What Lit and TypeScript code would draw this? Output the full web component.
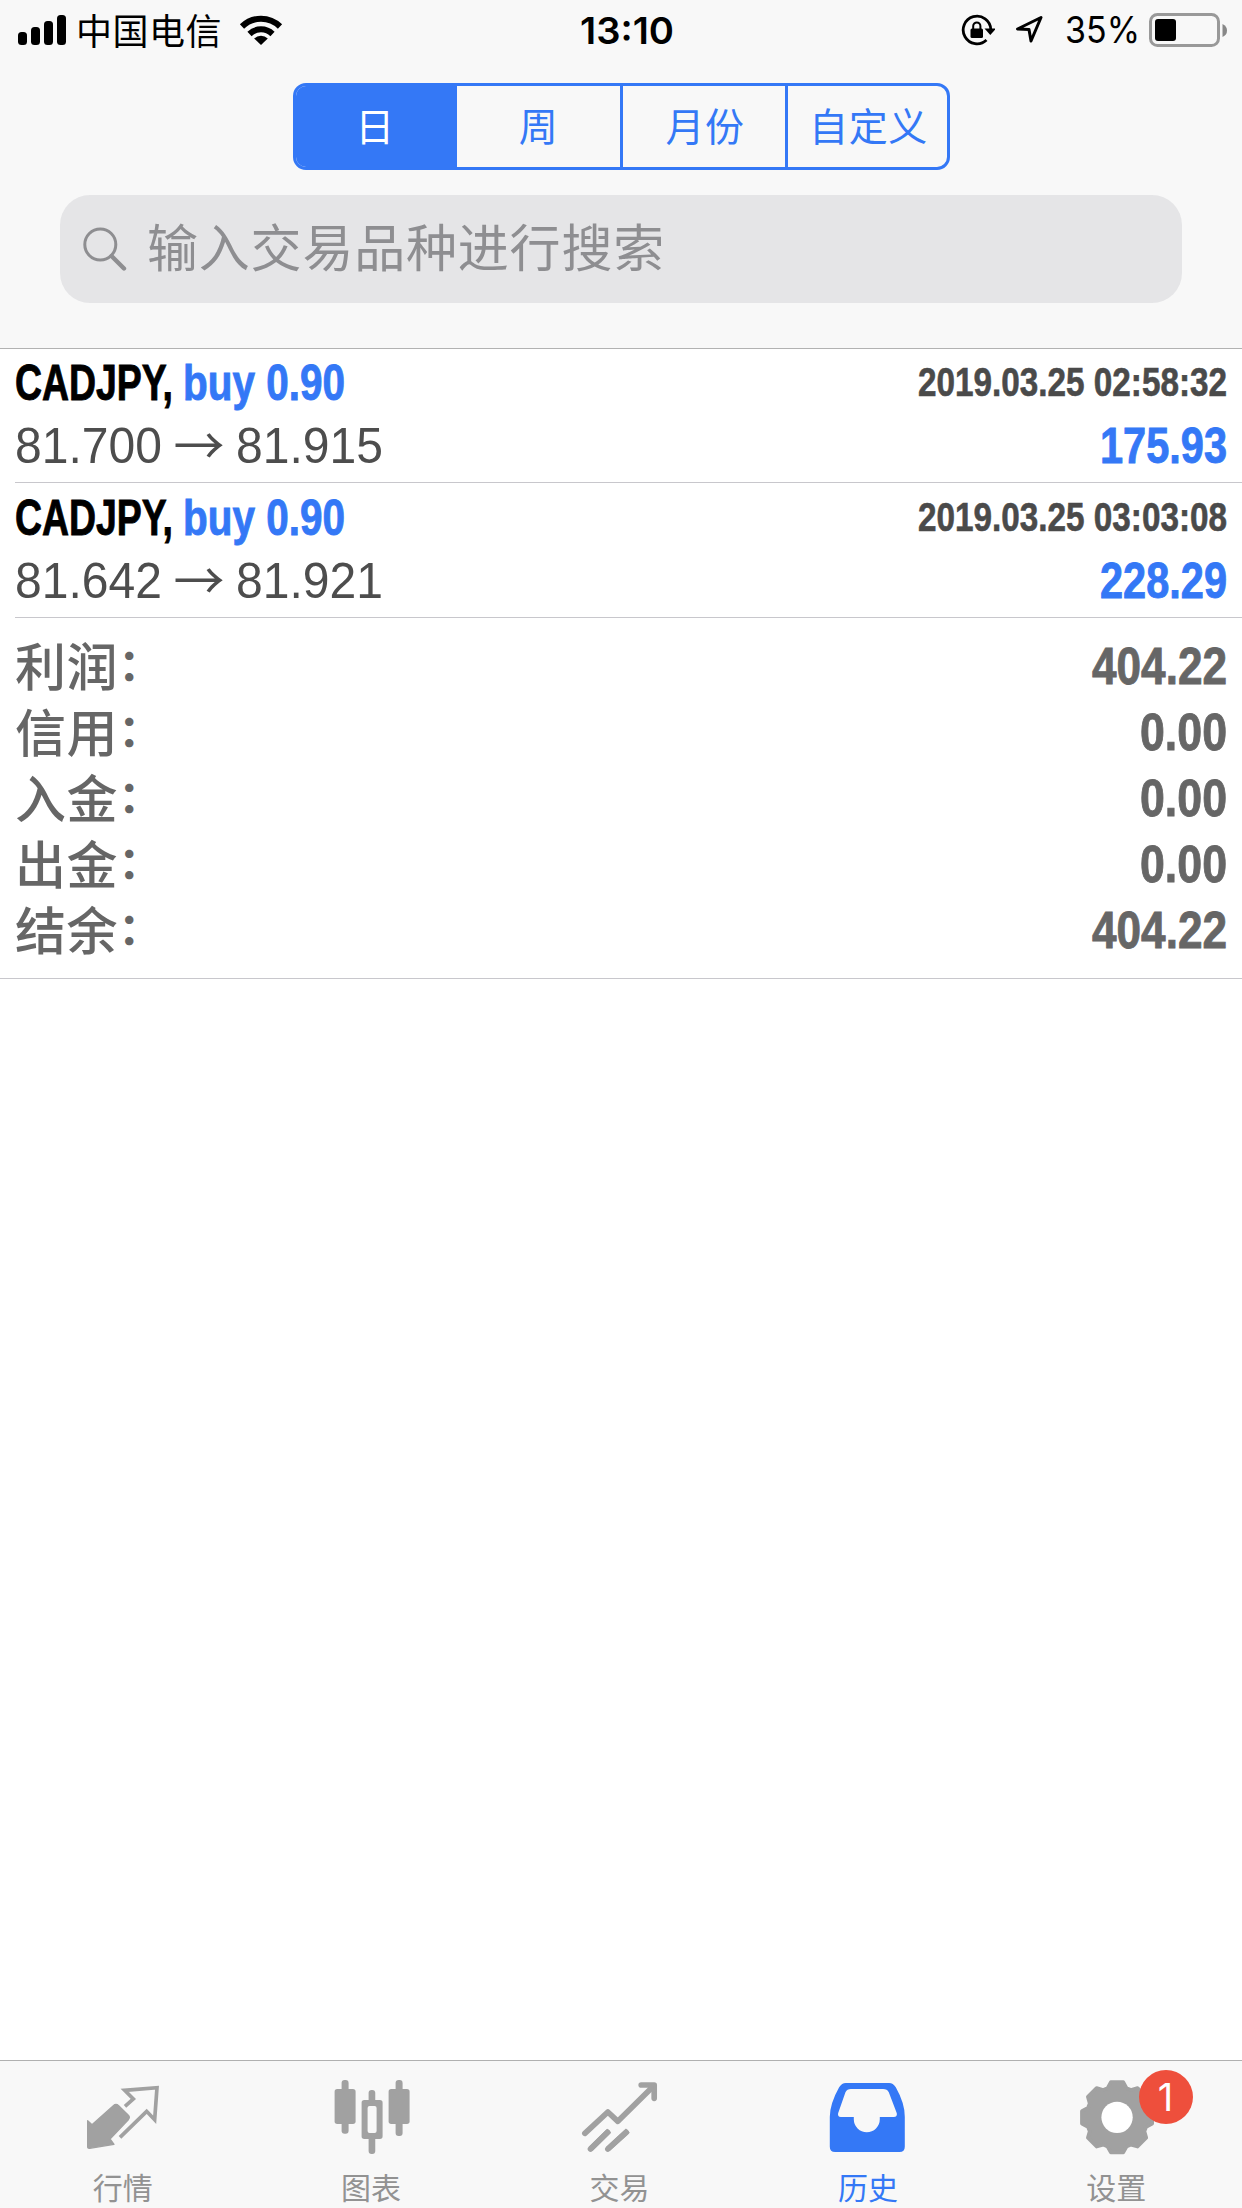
import { LitElement, html, svg, css } from "lit";
import { customElement, property } from "lit/decorators.js";
import { classMap } from "lit/directives/class-map.js";

/** Text condensed or stretched horizontally to an exact width. */
@customElement("fit-text")
class FitText extends LitElement {
  @property() text = "";
  @property({ type: Number }) width = 0;

  static styles = css`
    :host { display: inline-block; white-space: pre; text-align: left; }
    .inner { display: inline-block; transform-origin: 0 50%; }
  `;

  render() {
    return html`<span class="inner">${this.text}</span>`;
  }

  updated() {
    const inner = this.renderRoot.querySelector(".inner") as HTMLElement;
    const natural = inner.getBoundingClientRect().width;
    if (!natural || inner.style.transform) return;
    inner.style.transform = `scaleX(${this.width / natural})`;
    this.style.width = `${this.width}px`;
    inner.style.marginRight = `${this.width - natural}px`;
  }
}

interface Deal {
  symbol: string;
  side: string;
  time: string;
  open: string;
  close: string;
  profit: string;
}

const deals: Deal[] = [
  { symbol: "CADJPY,", side: "buy 0.90", time: "2019.03.25 02:58:32", open: "81.700", close: "81.915", profit: "175.93" },
  { symbol: "CADJPY,", side: "buy 0.90", time: "2019.03.25 03:03:08", open: "81.642", close: "81.921", profit: "228.29" },
];

const totals = [
  { label: "利润", value: "404.22", width: 135 },
  { label: "信用", value: "0.00", width: 87 },
  { label: "入金", value: "0.00", width: 87 },
  { label: "出金", value: "0.00", width: 87 },
  { label: "结余", value: "404.22", width: 135 },
];

const gearOutline = () => {
  const pts: string[] = [];
  const at = (deg: number, r: number) => {
    const a = (deg * Math.PI) / 180;
    return `${(230 + r * Math.sin(a)).toFixed(1)},${(202 + r * Math.cos(a)).toFixed(1)}`;
  };
  for (let k = 0; k < 8; k++) {
    const c = k * 45;
    pts.push(at(c - 18, 92), at(c - 10, 107), at(c + 10, 107), at(c + 18, 92));
  }
  return `M${pts.join("L")}Z`;
};

const tabs = [
  {
    label: "行情",
    box: "-150 33 745.2 312",
    icon: svg`
      <path d="M113,212L126,224L190,167Q198,160 206,167L235,196Q241,202 235,209L180,267L192,283L119,295Q113,296 113,290Z"
        fill="currentColor" stroke="currentColor" stroke-width="4" stroke-linejoin="round"/>
      <path d="M225,169L250,147L224,121L321,113L314,209L290,184L210,262" fill="none" stroke="currentColor" stroke-width="11"/>`,
  },
  {
    label: "图表",
    box: "595.2 33 745.2 312",
    icon: svg`
      <g fill="currentColor">
        <rect x="855" y="117" width="63" height="105" rx="8"/><rect x="876" y="90" width="21" height="161" rx="9"/>
        <rect x="1017" y="117" width="63" height="105" rx="8"/><rect x="1038" y="90" width="21" height="168" rx="9"/>
        <path fill-rule="evenodd" d="M944,150h47q8,0 8,8v101q0,8 -8,8h-47q-8,0 -8,-8v-101q0,-8 8,-8zM960,168q-6,0 -6,6v69q0,6 6,6h15q6,0 6,-6v-69q0,-6 -6,-6z"/>
        <rect x="957" y="120" width="20" height="40" rx="9"/><rect x="957" y="258" width="20" height="54" rx="9"/>
      </g>`,
  },
  {
    label: "交易",
    box: "-159.6 33 745.2 312",
    icon: svg`
      <g fill="none" stroke="currentColor" stroke-width="17" stroke-linecap="round" stroke-linejoin="round">
        <path d="M104,250L173,186L203,214L304,114"/>
        <path d="M273,105H312V145"/>
        <path d="M290,105L312,127V105Z" stroke-width="5" fill="currentColor"/>
        <path d="M121,297L172,247M173,297L228,247"/>
        <path d="M121,297L177,242M173,297L233,242" stroke-linecap="butt"/>
      </g>`,
  },
  {
    label: "历史",
    box: "585.6 33 745.2 312",
    active: true,
    icon: svg`
      <path fill="currentColor" fill-rule="evenodd" d="M888,99H1018Q1030,99 1038,112Q1065,160 1065,200V290Q1065,306 1049,306H856Q840,306 840,290V200Q841,160 868,112Q876,99 888,99Z
        M903,117Q892,117 887,127L865,190Q863,201 873,201H912V208A39,39 0 0 0 990,208V201H1032Q1043,201 1041,190L1017,127Q1012,117 1000,117Z"/>`,
  },
  {
    label: "设置",
    box: "-139.2 33 745.2 312",
    badge: "1",
    icon: svg`
      <path fill="currentColor" stroke="currentColor" stroke-width="11" stroke-linejoin="round" d="${gearOutline()}"/>
      <circle cx="230" cy="202" r="47" fill="#fff"/>`,
  },
] as { label: string; box: string; active?: boolean; badge?: string; icon: unknown }[];

@customElement("app-root")
class AppRoot extends LitElement {
  static styles = css`
    :host {
      display: flex; flex-direction: column; box-sizing: border-box;
      width: 1242px; height: 2208px; overflow: hidden; background: #fff;
      font-family: "Liberation Sans", "Noto Sans CJK SC", sans-serif; color: #000;
    }
    svg { display: block; flex: none; }
    .cjk { font-family: "Noto Sans CJK SC", sans-serif; }

    .top { height: 349px; box-sizing: border-box; background: #f8f8f8; border-bottom: 1px solid #b2b2b2; flex: none;
      display: flex; flex-direction: column; }
    .status { height: 62px; display: grid; grid-template-columns: 1fr auto 1fr; align-items: center; }
    .status-left { display: flex; align-items: center; padding-left: 18px; height: 60px; padding-bottom: 2px; }
    .status-right { display: flex; align-items: center; justify-content: flex-end; padding-right: 15px; height: 60px; padding-bottom: 2px; }
    .carrier { font-size: 36px; line-height: 52px; letter-spacing: 0.5px; margin: 0 17px 2px 10px; }
    .clock { font: 600 37px/62px Inter, sans-serif; padding: 0 0 0 11px; }
    .battery-text { font: 400 36.5px/62px Inter, sans-serif; margin: 0 9px 0 21px; }
    .loc { margin-left: 20px; }

    .segments { margin: 21px 0 0 293px; width: 657px; height: 87px; box-sizing: border-box;
      border: 3px solid #3478f6; border-radius: 13px; overflow: hidden; display: grid;
      grid-template-columns: 161px 163px 165px 1fr; }
    .segment { display: flex; align-items: center; justify-content: center; color: #3478f6;
      font-size: 39px; letter-spacing: 0.6px; line-height: 75px; padding-bottom: 4px; }
    .segment:nth-child(n + 3) { border-left: 3px solid #3478f6; padding-left: 2px; }
    .segment:nth-child(1) { padding-right: 3px; }
    .segment.on { background: #3478f6; color: #fff; }

    .search { margin: 25px 60px 0; height: 108px; border-radius: 30px; background: #e5e5e7; color: #8e8e91;
      display: flex; align-items: center; padding-left: 22px; gap: 19px; }
    .placeholder { font-size: 51px; line-height: 80px; letter-spacing: 0.8px; padding-bottom: 9px; }

    .deal { margin-left: 15px; height: 135px; box-sizing: border-box; border-bottom: 1px solid #c8c7cc;
      padding: 4px 15px 0 0; }
    .deal:first-child { height: 134px; padding-top: 3px; }
    .line { display: flex; justify-content: space-between; align-items: center; height: 62px; line-height: 62px; }
    .line + .line { padding-top: 1px; }
    .left { display: flex; align-items: center; }
    .bold { font-weight: 700; font-size: 50px; -webkit-text-stroke: 0.9px currentColor; }
    .blue { color: #3478f6; }
    .side { margin-left: 10px; }
    .time { font-weight: 700; font-size: 40px; color: #4a4a4a; -webkit-text-stroke: 0.6px currentColor; padding-bottom: 2px; }
    .price { font-size: 49.5px; color: #4d4d4d; }
    .arrow { font: 400 51px/56px "Noto Sans CJK SC", sans-serif; color: #4d4d4d; width: 74px; text-align: center; padding-bottom: 6px; }

    .totals { height: 361px; box-sizing: border-box; padding: 15px 15px 0; border-bottom: 1px solid #c8c7cc; }
    .total { height: 66px; display: flex; justify-content: space-between; color: #666; }
    .label { font-weight: 500; font-size: 51px; line-height: 72px; letter-spacing: 0.6px; }
    .label-colon { font-size: 44px; font-weight: 700; position: relative; top: -5px; }
    .total-value { font-weight: 700; font-size: 52px; line-height: 66px; -webkit-text-stroke: 0.9px currentColor; }

    .body { flex: 1; }
    .tabs { flex: none; height: 148px; box-sizing: border-box; border-top: 1px solid #b0b0b0; background: #f8f8f8;
      display: grid; grid-template-columns: repeat(5, 1fr); }
    .tab { position: relative; display: flex; flex-direction: column; align-items: center; color: #929292; }
    .tab .icon { color: #a1a1a1; }
    .tab.on, .tab.on .icon { color: #3478f6; }
    .tab-label { font-size: 30px; line-height: 42px; padding-right: 3px; }
    .badge { position: absolute; left: 145px; top: 9px; width: 54px; height: 54px; border-radius: 50%;
      background: #ee4f3c; color: #fff; font: 400 38px/54px Inter, sans-serif; text-align: center; }
  `;

  private status() {
    return html`
      <div class="status">
        <div class="status-left">
          <svg width="48" height="30" viewBox="18 15 48 30">
            <rect x="18" y="32" width="9" height="13" rx="3.5"/><rect x="31" y="27" width="9" height="18" rx="3.5"/>
            <rect x="44" y="21" width="9" height="24" rx="3.5"/><rect x="57" y="15" width="9" height="30" rx="3.5"/>
          </svg>
          <span class="carrier cjk">中国电信</span>
          <svg width="44" height="32" viewBox="239 14 44 32">
            <g fill="none" stroke="#000" stroke-width="6">
              <path d="M242,26.5A27,27 0 0 1 280,26.5"/><path d="M249.5,34A16.5,16.5 0 0 1 272.500,34"/>
            </g>
            <path d="M261,45L254.200,38.500A10,10 0 0 1 267.800,38.500Z"/>
          </svg>
        </div>
        <span class="clock"><fit-text text="13:10" width="94"></fit-text></span>
        <div class="status-right">
          <svg width="34" height="32" viewBox="961 14 34 32">
            <path d="M986.500,40A13.800,13.800 0 1 1 990.800,29.500" fill="none" stroke="#000" stroke-width="2.800"/>
            <path d="M984.500,28.500H996L990.300,35Z"/>
            <rect x="970.500" y="28.500" width="12.500" height="9.500" rx="1.500"/>
            <path d="M973.200,29V26a3.600,3.600 0 0 1 7.200,0V29" fill="none" stroke="#000" stroke-width="2"/>
          </svg>
          <svg class="loc" width="29" height="30" viewBox="1015 16 29 30">
            <path d="M1017.500,30L1041,18.500L1031,42L1029,30.500Z" fill="none" stroke="#000" stroke-width="3" stroke-linejoin="round"/>
          </svg>
          <span class="battery-text"><fit-text text="35%" width="75"></fit-text></span>
          <svg width="78" height="34" viewBox="1149 13 78 34">
            <rect x="1150.500" y="14.500" width="68" height="31" rx="7" fill="none" stroke="#999" stroke-width="3"/>
            <rect x="1155" y="19" width="21" height="22" rx="3"/>
            <path d="M1222.500,24Q1227,26 1227,30.500T1222.500,37Z" fill="#888"/>
          </svg>
        </div>
      </div>`;
  }

  private deal(d: Deal) {
    return html`
      <div class="deal">
        <div class="line">
          <div class="left bold">
            <fit-text text=${d.symbol} width="158"></fit-text>
            <fit-text class="blue side" text=${d.side} width="162"></fit-text>
          </div>
          <fit-text class="time" text=${d.time} width="309"></fit-text>
        </div>
        <div class="line">
          <div class="left">
            <fit-text class="price" text=${d.open} width="147"></fit-text>
            <span class="arrow">→</span>
            <fit-text class="price" text=${d.close} width="147"></fit-text>
          </div>
          <fit-text class="bold blue" text=${d.profit} width="127"></fit-text>
        </div>
      </div>`;
  }

  render() {
    return html`
      <div class="top">
        ${this.status()}
        <div class="segments">
          ${["日", "周", "月份", "自定义"].map(
            (s, i) => html`<div class=${classMap({ segment: true, cjk: true, on: i === 0 })}>${s}</div>`
          )}
        </div>
        <div class="search">
          <svg width="46" height="46" viewBox="82 225 46 46" fill="none" stroke="#8e8e91">
            <ellipse cx="100.300" cy="243.500" rx="15.500" ry="15.500" stroke-width="3"/>
            <path d="M111.500,255L124,267.500" stroke-width="4.400" stroke-linecap="round"/>
          </svg>
          <span class="placeholder cjk">输入交易品种进行搜索</span>
        </div>
      </div>
      <div class="body">
        <div class="deals">${deals.map((d) => this.deal(d))}</div>
        <div class="totals">
          ${totals.map(
            (t) => html`<div class="total">
              <span class="label">${t.label}<span class="label-colon">：</span></span>
              <fit-text class="total-value" text=${t.value} width=${t.width}></fit-text>
            </div>`
          )}
        </div>
      </div>
      <div class="tabs">
        ${tabs.map(
          (t) => html`<div class=${classMap({ tab: true, on: !!t.active })}>
            <svg class="icon" width="248.4" height="104" viewBox=${t.box}>${t.icon}</svg>
            <span class="tab-label cjk">${t.label}</span>
            ${t.badge ? html`<span class="badge">${t.badge}</span>` : ""}
          </div>`
        )}
      </div>`;
  }
}
